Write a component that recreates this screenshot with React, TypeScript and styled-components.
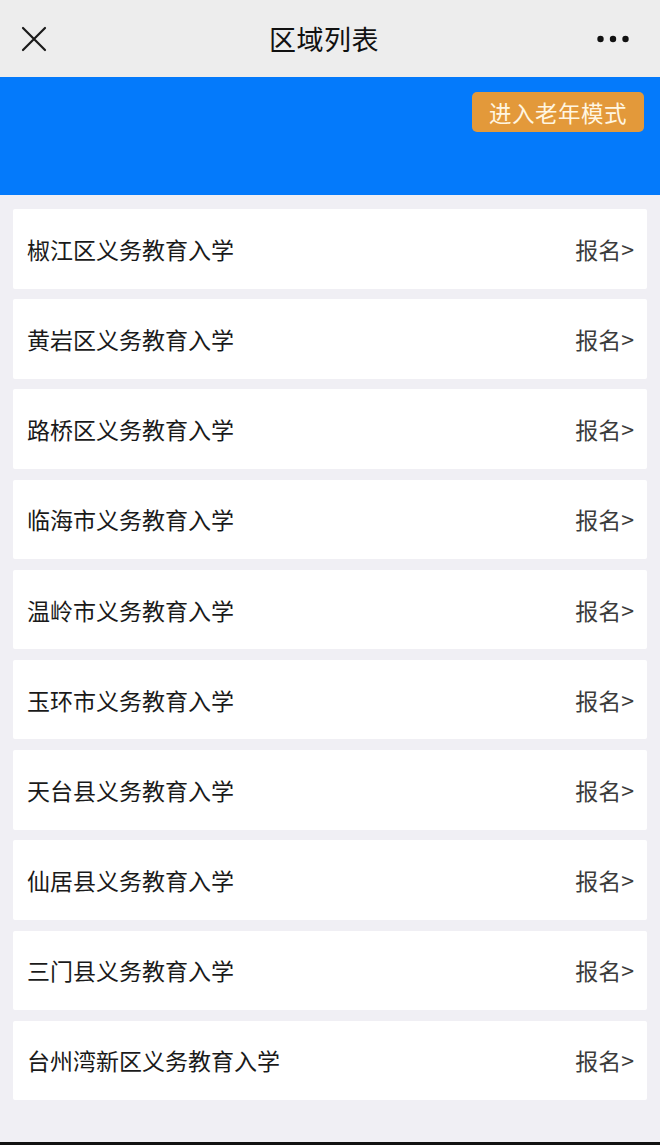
import styled, { createGlobalStyle } from "styled-components";

const regions = [
  "椒江区",
  "黄岩区",
  "路桥区",
  "临海市",
  "温岭市",
  "玉环市",
  "天台县",
  "仙居县",
  "三门县",
  "台州湾新区",
];

const GlobalStyle = createGlobalStyle`
  html, body {
    margin: 0;
    padding: 0;
    background: #f0eff4;
  }
  * {
    box-sizing: border-box;
  }
  body {
    font-family: "Noto Sans CJK SC", "Noto Sans", sans-serif;
  }
`;

const App = () => {
  return (
    <>
      <GlobalStyle />
      <Page>
        <NavBar>
          <NavIcon>
            <svg width="26" height="26" viewBox="0 0 26 26">
              <path
                d="M2 2 L24 24 M24 2 L2 24"
                stroke="#1a1a1a"
                strokeWidth="2.2"
                strokeLinecap="round"
              />
            </svg>
          </NavIcon>
          <NavTitle>区域列表</NavTitle>
          <NavIcon $end>
            <svg width="32" height="8" viewBox="0 0 32 8">
              <circle cx="3.5" cy="4" r="3.2" fill="#111" />
              <circle cx="16" cy="4" r="3.2" fill="#111" />
              <circle cx="28.5" cy="4" r="3.2" fill="#111" />
            </svg>
          </NavIcon>
        </NavBar>
        <Banner>
          <ElderButton>进入老年模式</ElderButton>
        </Banner>
        <List>
          {regions.map((region) => (
            <Card key={region}>
              <CardTitle>{region}义务教育入学</CardTitle>
              <CardAction>报名&gt;</CardAction>
            </Card>
          ))}
        </List>
        <BottomBar />
      </Page>
    </>
  );
};

const Page = styled.div`
  width: 660px;
  height: 1145px;
  display: flex;
  flex-direction: column;
  background: #f0eff4;
  overflow: hidden;
`;

const NavBar = styled.header`
  height: 77px;
  padding: 0 31px 0 21px;
  background: #ededed;
  display: grid;
  grid-template-columns: 1fr auto 1fr;
  align-items: center;
`;

const NavIcon = styled.div<{ $end?: boolean }>`
  height: 36px;
  display: flex;
  align-items: center;
  justify-content: ${(p) => (p.$end ? "flex-end" : "flex-start")};
`;

const NavTitle = styled.h1`
  margin: 0;
  font-size: 27px;
  font-weight: 400;
  color: #111;
  letter-spacing: 0.5px;
  transform: translateX(-1px);
`;

const Banner = styled.div`
  height: 118px;
  background: #047afb;
  display: flex;
  justify-content: flex-end;
  align-items: flex-start;
  padding: 15px 16px 0 0;
`;

const ElderButton = styled.button`
  width: 172px;
  height: 40px;
  border: none;
  border-radius: 5px;
  background: #e3993a;
  color: #fff6e2;
  font-family: "Noto Sans CJK SC", sans-serif;
  font-size: 22.5px;
  letter-spacing: 0.5px;
  padding: 0;
  display: flex;
  align-items: center;
  justify-content: center;
`;

const List = styled.div`
  display: flex;
  flex-direction: column;
  gap: 10.7px;
  padding: 14px 13px 0 13px;
  flex: 1;
`;

const Card = styled.div`
  height: 79.5px;
  flex-shrink: 0;
  background: #fff;
  border-radius: 2px;
  display: flex;
  align-items: center;
  justify-content: space-between;
  padding: 0 13px 0 14px;
`;

const CardTitle = styled.span`
  font-size: 23px;
  color: #1a1a1a;
`;

const CardAction = styled.span`
  font-size: 23px;
  color: #3c3c3c;
`;

const BottomBar = styled.div`
  height: 3px;
  background: #111;
`;

export default App;
